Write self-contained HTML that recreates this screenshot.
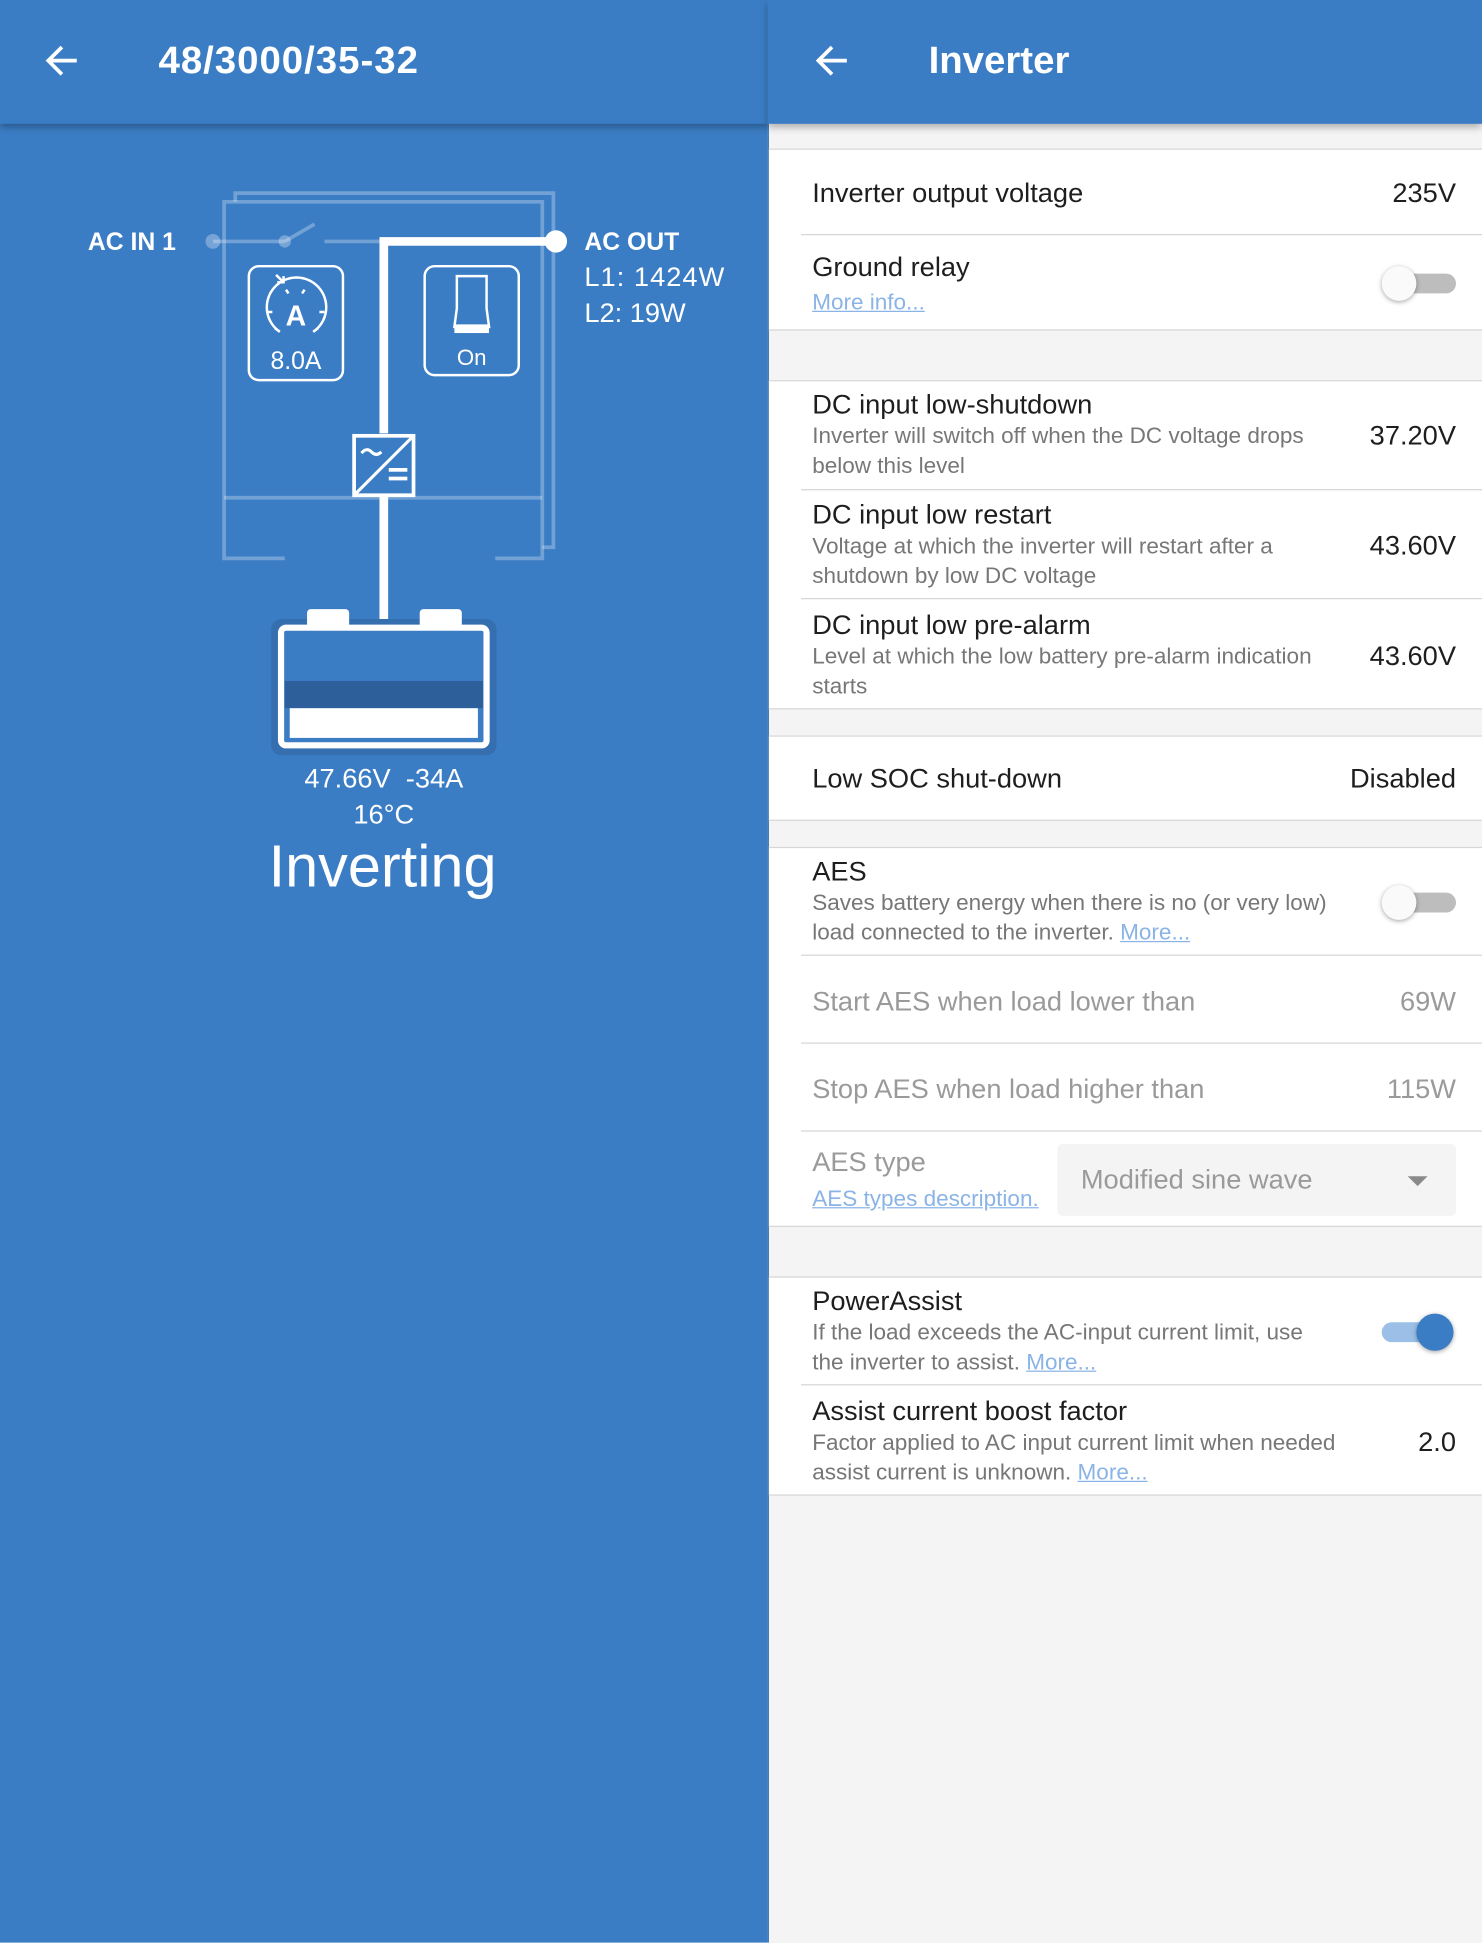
<!DOCTYPE html>
<html><head><meta charset="utf-8">
<style>
html,body{margin:0;padding:0;width:1482px;height:1942px;overflow:hidden;background:#f4f4f4;font-family:"Liberation Sans",sans-serif}
#w{position:absolute;left:0;top:0;width:1197px;height:1569px;transform:scale(1.2381);transform-origin:0 0}
.a{position:absolute;white-space:nowrap}
#left{position:absolute;left:0;top:0;width:620px;height:1569px;background:#3b7dc5}
#right{position:absolute;left:620px;top:0;width:577px;height:1569px;background:#f4f4f4;border-left:1px solid #2f6aab}
.hdr{position:absolute;top:0;height:100px;background:#3b7dc5;box-shadow:0 3px 6px rgba(0,0,0,.3)}
.wh{position:absolute;left:0;width:577px;background:#fff;border-top:1px solid #d6d6d6;border-bottom:1px solid #d6d6d6}
.dv{position:absolute;left:26px;right:0;height:1px;background:#d6d6d6}
.t{font-size:22px;color:#1e1e1e}
.d{font-size:18.2px;color:#777;line-height:24px}
.v{font-size:22px;color:#1e1e1e;right:22px}
.g{color:#9a9a9a}
.lk{color:#8ab4e6;text-decoration:underline}
.sw{position:absolute;width:60px;height:24px}
</style></head><body><div id="w">
<div id="left">
<svg width="620" height="760" style="position:absolute;left:0;top:0">
 <g fill="none" stroke="rgba(255,255,255,0.28)" stroke-width="3">
  <polyline points="190,163 190,156 447,156 447,442 438,442"/>
  <polyline points="230,451 181,451 181,163 438,163 438,451 400,451"/>
  <line x1="181" y1="402" x2="438" y2="402"/>
  <line x1="172" y1="195" x2="230" y2="195"/>
  <line x1="230" y1="195" x2="254" y2="181"/>
  <line x1="262" y1="195" x2="307" y2="195"/>
 </g>
 <circle cx="172" cy="195" r="6" fill="rgba(255,255,255,0.3)"/>
 <circle cx="230" cy="195" r="5" fill="rgba(255,255,255,0.3)"/>
 <polyline points="310,350 310,195 449,195" fill="none" stroke="#fff" stroke-width="7"/>
 <line x1="310" y1="400" x2="310" y2="500" stroke="#fff" stroke-width="7"/>
 <circle cx="449" cy="195" r="9" fill="#fff"/>
 <rect x="201" y="215" width="76" height="92" rx="8" fill="none" stroke="#fff" stroke-width="2"/>
 <path d="M226,268 A24,24 0 1 1 253,268" fill="none" stroke="#fff" stroke-width="2"/>
 <path d="M226,268 l-4,-3 M253,268 l4,-3 M216,252 h4 M262,252 h-4 M231,234 l2,3 M246,234 l-2,3" stroke="#fff" stroke-width="2"/>
 <text x="239" y="263" font-size="23" font-weight="bold" fill="#fff" text-anchor="middle" font-family="Liberation Sans">A</text>
 <path d="M223,222 l5,5 M229,223 v5 h-5" stroke="#fff" stroke-width="2" fill="none"/>
 <text x="239" y="298" font-size="20" fill="#fff" text-anchor="middle" font-family="Liberation Sans">8.0A</text>
 <rect x="343" y="215" width="76" height="88" rx="8" fill="none" stroke="#fff" stroke-width="2"/>
 <path d="M369,223 h24 v26 l2,15 h-28 l2,-15 z" fill="none" stroke="#fff" stroke-width="2"/>
 <rect x="367" y="262" width="28" height="7" fill="#fff"/>
 <text x="381" y="295" font-size="18" fill="#fff" text-anchor="middle" font-family="Liberation Sans">On</text>
 <rect x="286" y="352" width="48" height="48" fill="#3b7dc5" stroke="#fff" stroke-width="3"/>
 <line x1="287" y1="399" x2="333" y2="353" stroke="#fff" stroke-width="2.5"/>
 <path d="M292,366 q4,-5 8,-1 t8,0" fill="none" stroke="#fff" stroke-width="2.5"/>
 <rect x="314" y="378" width="15" height="3" fill="#fff"/><rect x="314" y="385" width="15" height="3" fill="#fff"/>
 <rect x="219" y="500" width="182" height="110" rx="8" fill="#356fb0"/>
 <rect x="248" y="492" width="34" height="16" rx="3" fill="#fff"/>
 <rect x="339" y="492" width="34" height="16" rx="3" fill="#fff"/>
 <rect x="227" y="507" width="166" height="95" rx="4" fill="#3b7dc5" stroke="#fff" stroke-width="5"/>
 <rect x="230" y="550" width="160" height="22" fill="#2d5f9a"/>
 <rect x="234" y="572" width="152" height="24" fill="#fff"/>
 <g font-family="Liberation Sans" fill="#fff" text-anchor="middle">
 <text x="310" y="636" font-size="22" xml:space="preserve">47.66V  -34A</text>
 <text x="310" y="665" font-size="22">16°C</text>
 <text x="309" y="716" font-size="48">Inverting</text>
 </g>
 <g font-family="Liberation Sans" fill="#fff">
 <text x="71" y="202" font-size="20" font-weight="bold">AC IN 1</text>
 <text x="472" y="202" font-size="20" font-weight="bold">AC OUT</text>
 <text x="472" y="231" font-size="22" textLength="113">L1: 1424W</text>
 <text x="472" y="260" font-size="22">L2: 19W</text>
 </g>
</svg>
</div>
<div class="hdr" style="left:0;width:620px">
 <svg class="a" style="left:36px;top:35px" width="28" height="28"><path d="M26,14 H3 M14,3 L3,14 L14,25" stroke="#fff" stroke-width="3" fill="none"/></svg>
 <div class="a" style="left:128px;top:31px;font-size:31px;color:#fff;font-weight:bold;letter-spacing:0.8px">48/3000/35-32</div>
</div>
<div id="right">
 <div class="wh" style="top:120px;height:145px">
  <div class="a t" style="left:35px;top:22px">Inverter output voltage</div><div class="a v" style="top:22px">235V</div>
  <div class="dv" style="top:68px"></div>
  <div class="a t" style="left:35px;top:82px">Ground relay</div>
  <div class="a d lk" style="left:35px;top:111px">More info...</div>
  <div class="sw" style="left:495px;top:96px"><div style="position:absolute;left:10px;top:4px;width:50px;height:16px;border-radius:8px;background:#bdbdbd"></div><div style="position:absolute;left:0;top:-2px;width:28px;height:28px;border-radius:50%;background:#fafafa;box-shadow:0 1px 4px rgba(0,0,0,.35)"></div></div>
 </div>
 <div class="wh" style="top:307px;height:264px">
  <div class="a t" style="left:35px;top:6px">DC input low-shutdown</div>
  <div class="a d" style="left:35px;top:32px">Inverter will switch off when the DC voltage drops<br>below this level</div>
  <div class="a v" style="top:31px">37.20V</div>
  <div class="dv" style="top:87px"></div>
  <div class="a t" style="left:35px;top:95px">DC input low restart</div>
  <div class="a d" style="left:35px;top:121px">Voltage at which the inverter will restart after a<br>shutdown by low DC voltage</div>
  <div class="a v" style="top:120px">43.60V</div>
  <div class="dv" style="top:175px"></div>
  <div class="a t" style="left:35px;top:184px">DC input low pre-alarm</div>
  <div class="a d" style="left:35px;top:210px">Level at which the low battery pre-alarm indication<br>starts</div>
  <div class="a v" style="top:209px">43.60V</div>
 </div>
 <div class="wh" style="top:594px;height:67px">
  <div class="a t" style="left:35px;top:21px">Low SOC shut-down</div><div class="a v" style="top:21px">Disabled</div>
 </div>
 <div class="wh" style="top:684px;height:305px">
  <div class="a t" style="left:35px;top:6px">AES</div>
  <div class="a d" style="left:35px;top:32px">Saves battery energy when there is no (or very low)<br>load connected to the inverter. <span class="lk">More...</span></div>
  <div class="sw" style="left:495px;top:32px"><div style="position:absolute;left:10px;top:4px;width:50px;height:16px;border-radius:8px;background:#bdbdbd"></div><div style="position:absolute;left:0;top:-2px;width:28px;height:28px;border-radius:50%;background:#fafafa;box-shadow:0 1px 4px rgba(0,0,0,.35)"></div></div>
  <div class="dv" style="top:86px"></div>
  <div class="a t g" style="left:35px;top:111px">Start AES when load lower than</div><div class="a v g" style="top:111px">69W</div>
  <div class="dv" style="top:157px"></div>
  <div class="a t g" style="left:35px;top:182px">Stop AES when load higher than</div><div class="a v g" style="top:182px">115W</div>
  <div class="dv" style="top:228px"></div>
  <div class="a t g" style="left:35px;top:241px">AES type</div>
  <div class="a d lk" style="left:35px;top:271px">AES types description.</div>
  <div class="a" style="left:233px;top:239px;width:322px;height:58px;background:#f4f4f4;border-radius:4px">
   <div class="a t g" style="left:19px;top:16px">Modified sine wave</div>
   <div class="a" style="left:283px;top:26px;width:0;height:0;border-left:8px solid transparent;border-right:8px solid transparent;border-top:8px solid #8a8a8a"></div>
  </div>
 </div>
 <div class="wh" style="top:1031px;height:175px">
  <div class="a t" style="left:35px;top:6px">PowerAssist</div>
  <div class="a d" style="left:35px;top:32px">If the load exceeds the AC-input current limit, use<br>the inverter to assist. <span class="lk">More...</span></div>
  <div class="sw" style="left:495px;top:32px"><div style="position:absolute;left:0;top:4px;width:50px;height:16px;border-radius:8px;background:#9bbfe6"></div><div style="position:absolute;left:28px;top:-3px;width:30px;height:30px;border-radius:50%;background:#3b7dc5;box-shadow:0 1px 4px rgba(0,0,0,.35)"></div></div>
  <div class="dv" style="top:86px"></div>
  <div class="a t" style="left:35px;top:95px">Assist current boost factor</div>
  <div class="a d" style="left:35px;top:121px">Factor applied to AC input current limit when needed<br>assist current is unknown. <span class="lk">More...</span></div>
  <div class="a v" style="top:120px">2.0</div>
 </div>
</div>
<div class="hdr" style="left:620px;width:577px">
 <svg class="a" style="left:38px;top:35px" width="28" height="28"><path d="M26,14 H3 M14,3 L3,14 L14,25" stroke="#fff" stroke-width="3" fill="none"/></svg>
 <div class="a" style="left:130px;top:31px;font-size:31px;color:#fff;font-weight:bold">Inverter</div>
</div>
</div></body></html>
